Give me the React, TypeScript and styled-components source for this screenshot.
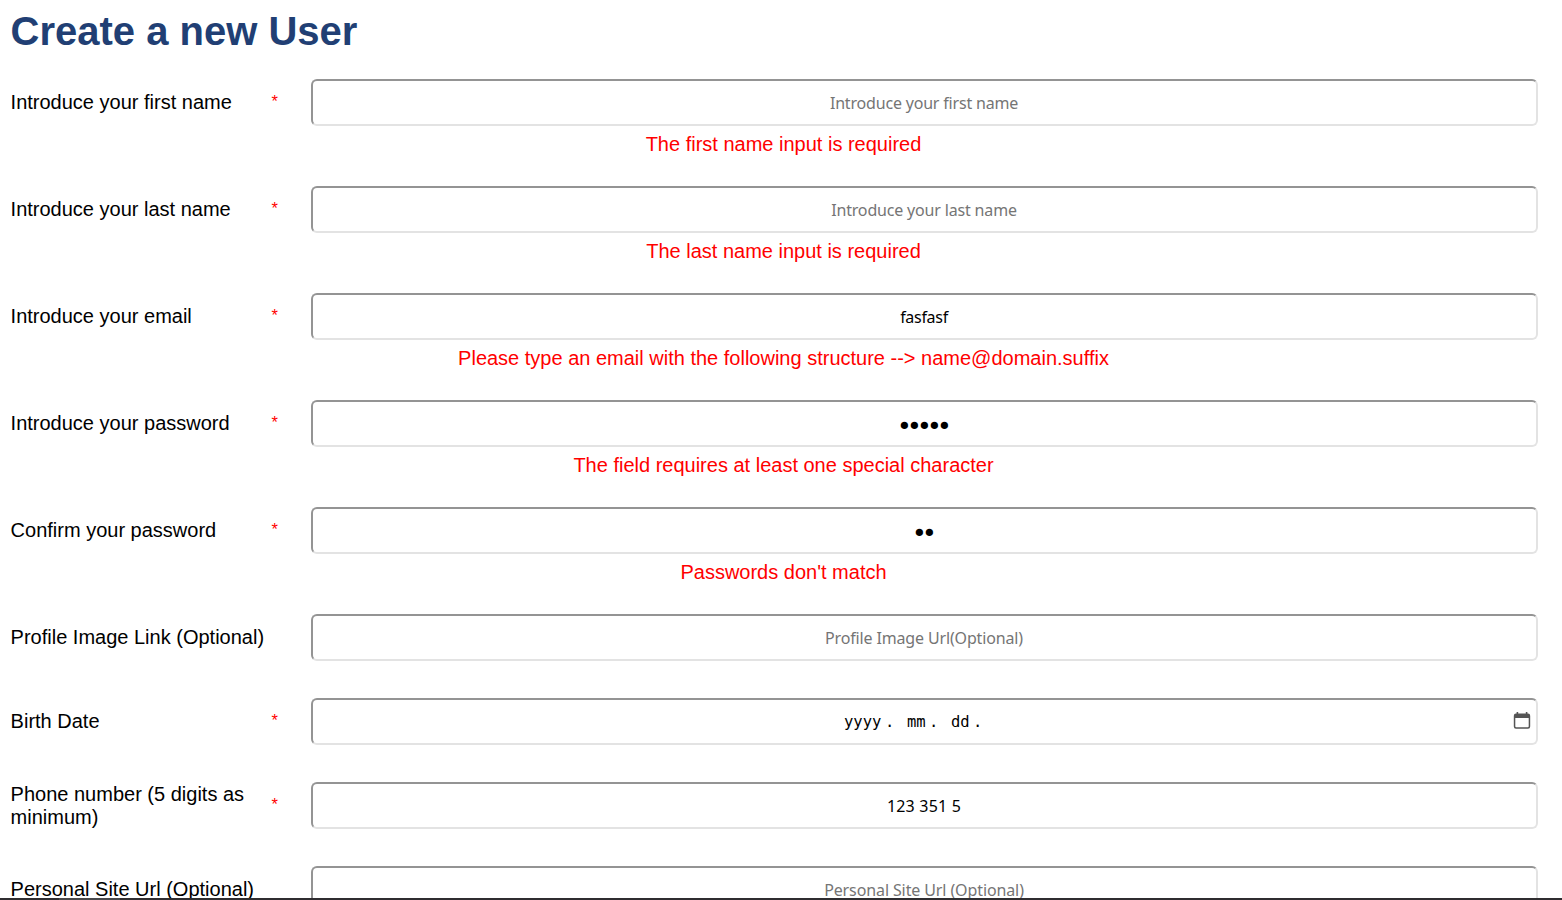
import React from "react";
import styled, { createGlobalStyle } from "styled-components";

const GlobalStyle = createGlobalStyle`
  * { box-sizing: border-box; }
  body { margin: 0; background: #fff; color: #000; font-family: "Liberation Sans", Arial, sans-serif; overflow: hidden; }
`;

const Page = styled.main`
  height: 900px;
  display: flex;
  flex-direction: column;
  overflow: hidden;
`;

const Form = styled.form`
  flex: 1;
  min-height: 0;
  overflow: hidden;
  padding: 8px 5px 0 10.6px;
`;

const Title = styled.h1`
  margin: 0 0 25px;
  font-size: 40px;
  line-height: 46px;
  font-weight: 700;
  color: #213f74;
`;

const Field = styled.div`
  margin-bottom: 37px;
`;

const Row = styled.div`
  display: flex;
  align-items: center;
  height: 47px;
  padding-right: 19px;
`;

const Label = styled.label`
  width: 261px;
  font-size: 20px;
  line-height: 23px;
  padding-right: 5px;
`;

const Star = styled.span`
  width: 39.4px;
  padding-bottom: 4px;
  font-size: 16.5px;
  line-height: 18px;
  color: #f00;
`;

const controlFont = `
  font-family: "Noto Sans", Tahoma, sans-serif;
  font-size: 16px;
  line-height: 22px;
`;

const Input = styled.input<{ $spacing?: number }>`
  flex: 1;
  min-width: 0;
  height: 47px;
  padding: 1px 3px 1px 2px;
  border: 2px solid;
  border-color: #949494 #e3e3e3 #e3e3e3 #949494;
  border-radius: 6px;
  background: #fff;
  color: #000;
  text-align: center;
  outline: none;
  ${controlFont}
  letter-spacing: ${(p) => p.$spacing ?? 0}px;
  &::placeholder { color: #757575; opacity: 1; }
  &[type="password"] {
    padding: 5px 7px 0 2px;
    font-family: "DejaVu Sans", sans-serif;
    font-size: 25px;
    letter-spacing: -4.75px;
  }
`;

const DateBox = styled.div`
  flex: 1;
  height: 47px;
  display: flex;
  align-items: center;
  border: 2px solid;
  border-color: #949494 #e3e3e3 #e3e3e3 #949494;
  border-radius: 6px;
  padding-right: 5px;
  ${controlFont}
`;

const DateText = styled.div`
  flex: 1;
  display: flex;
  justify-content: center;
  padding-right: 1px;
  font-family: "DejaVu Sans Mono", monospace;
  font-size: 15.5px;
`;

const Segment = styled.span<{ $width: number }>`
  width: ${(p) => p.$width}px;
  white-space: pre;
`;

const ErrorText = styled.p`
  margin: 0 0 0 -0.6px;
  padding-top: 7px;
  height: 23px;
  font-size: 20px;
  line-height: 23px;
  text-align: center;
  color: #f00;
`;

const BottomBar = styled.footer`
  flex: none;
  height: 2px;
  padding-left: 59px;
  background: #2f2d30;
`;

const BarThumb = styled.div`
  width: 61px;
  height: 2px;
  background: #49494b;
`;

const Icon = styled.svg`
  display: block;
  flex: none;
  margin-bottom: 2px;
`;

function CalendarIcon() {
  return (
    <Icon width="18" height="18" viewBox="0 0 18 18" aria-hidden="true">
      <path
        fill="#555"
        fillRule="evenodd"
        d="M3.6 0h1.6v1.6h7.6V0h1.6v1.6h.6a2.2 2.2 0 0 1 2.2 2.2v10.7a2.2 2.2 0 0 1-2.2 2.2H3a2.2 2.2 0 0 1-2.2-2.2V3.8A2.2 2.2 0 0 1 3 1.6h.6V0ZM2.3 6v8.3c0 .6.3.9.9.9h11.6c.6 0 .9-.3.9-.9V6H2.3Z"
      />
    </Icon>
  );
}

interface FieldData {
  label: string;
  required?: boolean;
  type?: string;
  placeholder?: string;
  value?: string;
  error?: string;
  spacing?: number;
}

const fields: FieldData[] = [
  { label: "Introduce your first name", required: true, placeholder: "Introduce your first name", error: "The first name input is required", spacing: -0.19 },
  { label: "Introduce your last name", required: true, placeholder: "Introduce your last name", error: "The last name input is required", spacing: -0.17 },
  { label: "Introduce your email", required: true, value: "fasfasf", error: "Please type an email with the following structure --> name@domain.suffix", spacing: -0.3 },
  { label: "Introduce your password", required: true, type: "password", value: "abcde", error: "The field requires at least one special character" },
  { label: "Confirm your password", required: true, type: "password", value: "ab", error: "Passwords don't match" },
  { label: "Profile Image Link (Optional)", placeholder: "Profile Image Url(Optional)", spacing: -0.15 },
  { label: "Birth Date", required: true, type: "date" },
  { label: "Phone number (5 digits as minimum)", required: true, value: "123 351 5", spacing: 0.2 },
  { label: "Personal Site Url (Optional)", placeholder: "Personal Site Url (Optional)", spacing: -0.11 },
];

export default function App() {
  return (
    <Page>
      <GlobalStyle />
      <Form>
        <Title>Create a new User</Title>
        {fields.map((f) => (
          <Field key={f.label}>
            <Row>
              <Label>{f.label}</Label>
              <Star>{f.required ? "*" : ""}</Star>
              {f.type === "date" ? (
                <DateBox>
                  <DateText>
                    <Segment $width={41}>yyyy</Segment>
                    <Segment $width={22}>.</Segment>
                    <Segment $width={22}>mm</Segment>
                    <Segment $width={22}>.</Segment>
                    <Segment $width={22}>dd</Segment>
                    <Segment $width={8}>.</Segment>
                  </DateText>
                  <CalendarIcon />
                </DateBox>
              ) : (
                <Input
                  type={f.type ?? "text"}
                  placeholder={f.placeholder}
                  defaultValue={f.value}
                  $spacing={f.spacing}
                />
              )}
            </Row>
            {f.error && <ErrorText>{f.error}</ErrorText>}
          </Field>
        ))}
      </Form>
      <BottomBar>
        <BarThumb />
      </BottomBar>
    </Page>
  );
}
